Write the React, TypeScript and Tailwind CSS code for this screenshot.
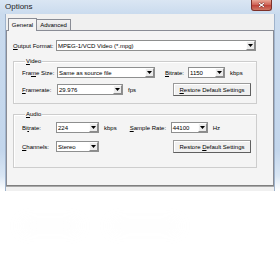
import React from 'react';

const Arrow = () => (
  <span className="flex h-[9px] w-[9px] items-center justify-center border border-t-[#fdfdfd] border-l-[#fdfdfd] border-r-[#8a8a8a] border-b-[#8a8a8a] bg-[#ececec]">
    <svg width="5" height="3" viewBox="0 0 5 3">
      <path d="M0 0h5L2.5 3z" fill="#000" />
    </svg>
  </span>
);

const Combo = ({ className, value }: { className: string; value: string }) => (
  <div className={`flex h-[11px] items-center border border-[#8e8f8f] bg-white ${className}`}>
    <span className="flex-1 truncate pl-[1px] leading-none">{value}</span>
    <Arrow />
  </div>
);

const Button = ({ children }: { children: React.ReactNode }) => (
  <div className="flex h-[13px] w-[78px] items-center justify-center border border-[#9a9a9a] border-r-[#5f5f5f] border-b-[#5f5f5f] bg-[#f0f0f0] leading-none shadow-[inset_1px_1px_0_#ffffff]">
    <span>{children}</span>
  </div>
);

const Group = ({ title, className, children }: { title: React.ReactNode; className: string; children: React.ReactNode }) => (
  <div className={`w-[244px] border border-[#cdcdcd] shadow-[inset_1px_1px_0_#ffffff] ${className}`}>
    <span className="-mt-[4px] ml-[3px] block w-fit bg-[#f4f4f4] px-[1px] leading-[7px]">{title}</span>
    {children}
  </div>
);

export default function App() {
  return (
    <div className="h-[270px] w-[280px] overflow-hidden bg-white font-['Liberation_Sans',Arial,sans-serif] text-[6px] text-black">
      <div className="flex h-[191px] flex-col bg-[linear-gradient(180deg,#dae6f3_0px,#cadbee_14px,#c3d6ec_150px,#d9e6f4_176px,#ffffff_191px)] px-[5px]">
        {/* title bar */}
        <div className="flex h-[14px] items-start justify-between">
          <span className="pt-[3px] text-[8px] leading-none text-[#1e1e1e]">Options</span>
          <div className="mr-[3px] flex h-[11px] w-[21px] items-center justify-center rounded-b-[3px] border border-t-0 border-[#7d3029] bg-[linear-gradient(180deg,#e9a896_0%,#d0675a_45%,#c0453a_55%,#cf7764_100%)]">
            <svg width="7" height="6" viewBox="0 0 7 6">
              <path d="M1 1l5 4M6 1L1 5" stroke="#5a1a14" strokeWidth="2.2" />
              <path d="M1 1l5 4M6 1L1 5" stroke="#fff" strokeWidth="1.1" />
            </svg>
          </div>
        </div>

        {/* client area */}
        <div className="flex flex-1 flex-col border-x border-[#9fb3cc] bg-[#f0f0f0] pt-[4px]">
          <div className="flex h-[12px] items-end pl-[2px]">
            <div className="relative z-10 -mb-[1px] flex h-[13px] w-[29px] items-center justify-center border border-b-0 border-[#898c95] bg-[#f4f4f4] leading-none">
              General
            </div>
            <div className="flex h-[11px] w-[34px] items-center justify-center border border-l-0 border-b-0 border-[#898c95] bg-[linear-gradient(180deg,#f2f2f2,#e3e3e3)] leading-none">
              Advanced
            </div>
          </div>

          <div className="h-[156px] w-[268px] border border-[#898c95] border-b-[#7f7f7f] bg-[#f4f4f4] pl-[6px] pt-[9px] shadow-[0_1px_0_#a8a8a8]">
            <div className="flex items-center">
              <span className="w-[43px] leading-none">
                <span className="underline">O</span>utput Format:
              </span>
              <Combo className="w-[200px]" value="MPEG-1/VCD Video (*.mpg)" />
            </div>

            <Group
              className="mt-[10px] pb-[7px] pl-[8px] pr-[5px]"
              title={<><span className="underline">V</span>ideo</>}
            >
              <div className="mt-[2px] flex items-center">
                <span className="w-[35px] leading-none">
                  Fra<span className="underline">m</span>e Size:
                </span>
                <Combo className="w-[98px]" value="Same as source file" />
                <span className="ml-[10px] w-[23px] leading-none">
                  <span className="underline">B</span>itrate:
                </span>
                <Combo className="w-[37px]" value="1150" />
                <span className="ml-[5px] leading-none">kbps</span>
              </div>
              <div className="mt-[5px] flex items-center">
                <span className="w-[35px] leading-none">
                  <span className="underline">F</span>ramerate:
                </span>
                <Combo className="w-[66px]" value="29.976" />
                <span className="ml-[5px] leading-none">fps</span>
                <div className="ml-auto">
                  <Button>
                    <span className="underline">R</span>estore Default Settings
                  </Button>
                </div>
              </div>
            </Group>

            <Group
              className="mt-[10px] pb-[14px] pl-[8px] pr-[5px]"
              title={<><span className="underline">A</span>udio</>}
            >
              <div className="mt-[4px] flex items-center">
                <span className="w-[34px] leading-none">
                  Bi<span className="underline">t</span>rate:
                </span>
                <Combo className="w-[43px]" value="224" />
                <span className="ml-[5px] leading-none">kbps</span>
                <span className="ml-[13px] w-[41px] leading-none">
                  <span className="underline">S</span>ample Rate:
                </span>
                <Combo className="w-[37px]" value="44100" />
                <span className="ml-[5px] leading-none">Hz</span>
              </div>
              <div className="mt-[7px] flex items-center">
                <span className="w-[34px] leading-none">
                  <span className="underline">C</span>hannels:
                </span>
                <Combo className="w-[43px]" value="Stereo" />
                <div className="ml-auto">
                  <Button>
                    Restore <span className="underline">D</span>efault Settings
                  </Button>
                </div>
              </div>
            </Group>
          </div>
        </div>
      </div>

      {/* faded reflection below the window */}
      <div className="mt-[30px] flex gap-[30px] px-[20px] opacity-10">
        <div className="h-[10px] w-[60px] rounded-full bg-[#e6e6e6] blur-[8px]" />
        <div className="h-[10px] w-[70px] rounded-full bg-[#e8e8e8] blur-[8px]" />
      </div>
    </div>
  );
}
